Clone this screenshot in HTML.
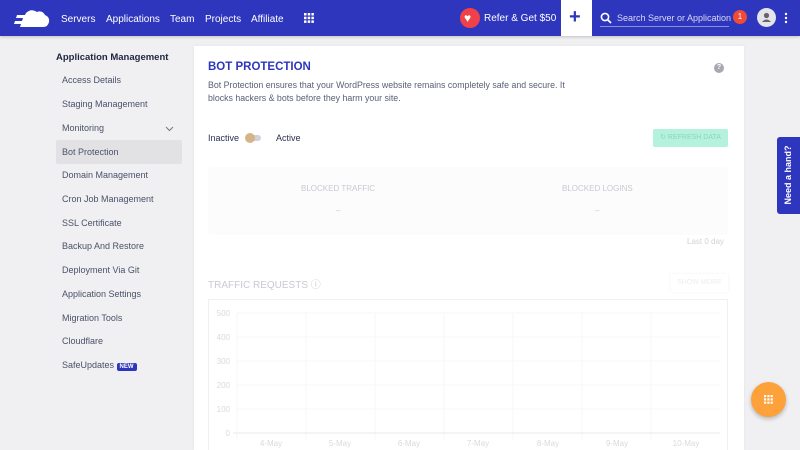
<!DOCTYPE html>
<html><head><meta charset="utf-8"><style>
*{margin:0;padding:0;box-sizing:border-box}
html,body{width:800px;height:450px;overflow:hidden}
body{background:#f0f0f2;font-family:"Liberation Sans",sans-serif;position:relative}
.hdr{position:absolute;left:0;top:0;width:800px;height:36px;background:#2e36bd;box-shadow:0 1px 3px rgba(0,0,0,.2)}
.hdr .n{position:absolute;top:14px;color:#fff;font-size:10px}
.side{position:absolute;left:56px;top:0}
.side div{position:absolute;left:6px;font-size:9px;color:#4a5168;white-space:nowrap}
.card{position:absolute;left:194px;top:46px;width:550px;height:404px;background:#fff;box-shadow:0 0 3px rgba(0,0,0,.06);overflow:hidden}
.a{position:absolute;white-space:nowrap}
</style></head><body>
<div class="hdr">
 <svg style="position:absolute;left:12px;top:9px" width="38" height="19" viewBox="0 0 38 19"><path d="M14 4 Q19 -1 25 3 Q30 1 33 6 Q38 8 37 13 Q36 18 31 18 L8 18 L9 15 L2 15 L3 12 L10 12 L11 9 L4 9 L5 6 L13 6 Z" fill="#fff"/></svg>
 <span class="n" style="left:61px">Servers</span>
 <span class="n" style="left:106px">Applications</span>
 <span class="n" style="left:170px">Team</span>
 <span class="n" style="left:205px">Projects</span>
 <span class="n" style="left:251px">Affiliate</span>
 <svg style="position:absolute;left:304px;top:13px" width="10" height="10"><g fill="#fff"><rect x="0" y="0" width="2.5" height="2.5"/><rect x="3.7" y="0" width="2.5" height="2.5"/><rect x="7.4" y="0" width="2.5" height="2.5"/><rect x="0" y="3.7" width="2.5" height="2.5"/><rect x="3.7" y="3.7" width="2.5" height="2.5"/><rect x="7.4" y="3.7" width="2.5" height="2.5"/><rect x="0" y="7.4" width="2.5" height="2.5"/><rect x="3.7" y="7.4" width="2.5" height="2.5"/><rect x="7.4" y="7.4" width="2.5" height="2.5"/></g></svg>
 <div style="position:absolute;left:460px;top:8px;width:20px;height:20px;border-radius:50%;background:#f0404a"></div>
 <span class="a" style="left:464px;top:11px;color:#fff;font-size:12px">♥</span>
 <span class="n" style="left:484px;top:13px">Refer &amp; Get $50</span>
 <div style="position:absolute;left:561px;top:0;width:31px;height:36px;background:#fff"></div>
 <span class="a" style="left:569px;top:6px;color:#2e36bd;font-size:20px;font-weight:bold">+</span>
 <svg style="position:absolute;left:600px;top:12px" width="12" height="12"><circle cx="5" cy="5" r="3.6" stroke="#fff" stroke-width="1.6" fill="none"/><path d="M7.6 7.6 L11 11" stroke="#fff" stroke-width="1.8"/></svg>
 <span class="n" style="left:617px;top:13px;color:#d8daf5;font-size:9px">Search Server or Application</span>
 <div style="position:absolute;left:600px;top:26px;width:129px;height:1px;background:#8a8fd8"></div>
 <div style="position:absolute;left:733px;top:10px;width:14px;height:14px;border-radius:50%;background:#ef4b37;color:#fff;font-size:8px;text-align:center;line-height:14px">1</div>
 <div style="position:absolute;left:757px;top:8px;width:19px;height:19px;border-radius:50%;background:#e4e4ea"></div>
 <svg style="position:absolute;left:757px;top:8px" width="19" height="19"><circle cx="9.5" cy="7.5" r="2.6" fill="#666"/><path d="M5 14 Q9.5 9 14 14 Z" fill="#666"/></svg>
 <svg style="position:absolute;left:784px;top:12px" width="4" height="12"><circle cx="2" cy="2" r="1.2" fill="#fff"/><circle cx="2" cy="6" r="1.2" fill="#fff"/><circle cx="2" cy="10" r="1.2" fill="#fff"/></svg>
</div>

<div class="side">
 <div style="left:0;top:52px;font-size:9.5px;font-weight:bold;color:#1f2540">Application Management</div>
 <div style="top:75px">Access Details</div>
 <div style="top:99px">Staging Management</div>
 <div style="top:123px">Monitoring</div>
 <div style="left:0;top:140px;width:126px;height:24px;background:#e2e2e5;border-radius:2px"></div>
 <div style="top:147px">Bot Protection</div>
 <div style="top:170px">Domain Management</div>
 <div style="top:194px">Cron Job Management</div>
 <div style="top:218px">SSL Certificate</div>
 <div style="top:241px">Backup And Restore</div>
 <div style="top:265px">Deployment Via Git</div>
 <div style="top:289px">Application Settings</div>
 <div style="top:313px">Migration Tools</div>
 <div style="top:336px">Cloudflare</div>
 <div style="top:360px">SafeUpdates <span style="background:#2e36bd;color:#fff;font-size:6px;padding:1px 3px;border-radius:2px;font-weight:bold">NEW</span></div>
</div>
<svg style="position:absolute;left:165px;top:126px" width="9" height="6"><path d="M1 1 L4.5 4.5 L8 1" stroke="#777" fill="none" stroke-width="1"/></svg>

<div class="card">
 <span class="a" style="left:14px;top:15px;font-size:11.5px;font-weight:bold;color:#2e36bd">BOT PROTECTION</span>
 <div style="position:absolute;left:520px;top:17px;width:10px;height:10px;border-radius:50%;background:#a8a8b0;color:#fff;font-size:7px;text-align:center;line-height:10px;font-weight:bold">?</div>
 <div class="a" style="left:14px;top:33px;font-size:8.8px;color:#5a6075;line-height:12.5px">Bot Protection ensures that your WordPress website remains completely safe and secure. It<br>blocks hackers &amp; bots before they harm your site.</div>
 <span class="a" style="left:14px;top:87px;font-size:9px;color:#2a3050">Inactive</span>
 <div style="position:absolute;left:53px;top:89px;width:14px;height:6px;border-radius:3px;background:#d2d2da"></div>
 <div style="position:absolute;left:51px;top:87px;width:10px;height:10px;border-radius:50%;background:#d6b48a"></div>
 <span class="a" style="left:82px;top:87px;font-size:9px;color:#2a3050">Active</span>
 <div style="position:absolute;left:459px;top:83px;width:75px;height:18px;background:#b4f2de;border-radius:2px;font-size:7px;color:#8ad6be;text-align:center;line-height:18px">↻ REFRESH DATA</div>
 <div style="position:absolute;left:14px;top:121px;width:520px;height:68px;background:#fcfcfd;border-radius:4px"></div>
 <span class="a" style="left:107px;top:138px;font-size:8px;color:#c8cad2">BLOCKED TRAFFIC</span>
 <span class="a" style="left:142px;top:160px;font-size:8px;color:#c8cad2">–</span>
 <span class="a" style="left:368px;top:138px;font-size:8px;color:#c8cad2">BLOCKED LOGINS</span>
 <span class="a" style="left:401px;top:160px;font-size:8px;color:#c8cad2">–</span>
 <span class="a" style="left:493px;top:191px;font-size:8px;color:#d0d2d8">Last 0 day</span>
 <span class="a" style="left:14px;top:230px;font-size:10px;color:#c8cad2">TRAFFIC REQUESTS ⓘ</span>
 <div style="position:absolute;left:477px;top:228px;width:57px;height:18px;box-shadow:0 0 3px rgba(0,0,0,.06);font-size:7px;color:#eceef0;text-align:center;line-height:18px">SHOW MORE</div>
 <div style="position:absolute;left:14px;top:253px;width:520px;height:200px;border:1px solid #f0f0f2"></div>
</div>
<svg style="position:absolute;left:208px;top:300px" width="525" height="150" font-family="Liberation Sans" font-size="8" fill="#dadada">
 <g stroke="#f7f7f8" stroke-width="1">
  <line x1="29" y1="13" x2="512" y2="13"/><line x1="29" y1="37" x2="512" y2="37"/><line x1="29" y1="61" x2="512" y2="61"/><line x1="29" y1="85" x2="512" y2="85"/><line x1="29" y1="109" x2="512" y2="109"/>
  <line x1="29" y1="13" x2="29" y2="140"/><line x1="98" y1="13" x2="98" y2="140"/><line x1="167" y1="13" x2="167" y2="140"/><line x1="236" y1="13" x2="236" y2="140"/><line x1="305" y1="13" x2="305" y2="140"/><line x1="374" y1="13" x2="374" y2="140"/><line x1="443" y1="13" x2="443" y2="140"/>
 </g>
 <line x1="25" y1="133" x2="512" y2="133" stroke="#e8e8ea"/>
 <g text-anchor="end"><text x="22" y="16">500</text><text x="22" y="40">400</text><text x="22" y="64">300</text><text x="22" y="88">200</text><text x="22" y="112">100</text><text x="22" y="136">0</text></g>
 <g text-anchor="middle"><text x="63" y="146">4-May</text><text x="132" y="146">5-May</text><text x="201" y="146">6-May</text><text x="270" y="146">7-May</text><text x="340" y="146">8-May</text><text x="409" y="146">9-May</text><text x="478" y="146">10-May</text></g>
</svg>
<div style="position:absolute;left:777px;top:137px;width:23px;height:77px;background:#2e36bd;border-radius:3px 0 0 3px"></div>
<span class="a" style="left:788px;top:175px;transform:translate(-50%,-50%) rotate(-90deg);color:#fff;font-size:9px;font-weight:bold">Need a hand?</span>
<div style="position:absolute;left:751px;top:382px;width:35px;height:35px;border-radius:50%;background:#fda13b;box-shadow:0 2px 4px rgba(0,0,0,.25)"></div>
<svg style="position:absolute;left:764px;top:395px" width="9" height="9"><g fill="#fff"><rect x="0" y="0" width="2.2" height="2.2"/><rect x="3.3" y="0" width="2.2" height="2.2"/><rect x="6.6" y="0" width="2.2" height="2.2"/><rect x="0" y="3.3" width="2.2" height="2.2"/><rect x="3.3" y="3.3" width="2.2" height="2.2"/><rect x="6.6" y="3.3" width="2.2" height="2.2"/><rect x="0" y="6.6" width="2.2" height="2.2"/><rect x="3.3" y="6.6" width="2.2" height="2.2"/><rect x="6.6" y="6.6" width="2.2" height="2.2"/></g></svg>
</body></html>
